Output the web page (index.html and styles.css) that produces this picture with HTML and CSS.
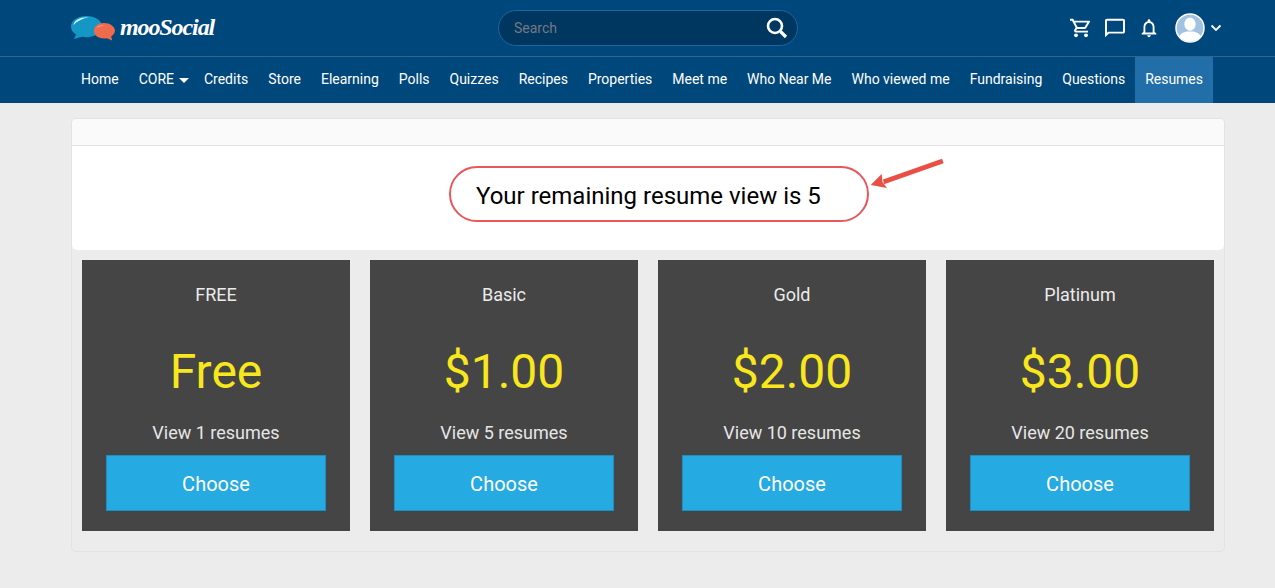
FILE: index.html
```html
<!DOCTYPE html>
<html lang="en">
<head>
<meta charset="utf-8">
<title>Resumes</title>
<link rel="stylesheet" href="styles.css">
</head>
<body>
<header class="site-header">
  <div class="top-row">
    <a class="logo" href="#">
      <svg class="logo-mark" width="44" height="26" viewBox="0 0 44 26">
        <path d="M15.500 1C7 1 0 5.500 0 11.500c0 3.500 2 6.200 5 8L3 24l8-2.200c1.400.3 3 .4 4.500.4 8.500 0 15.500-4.700 15.500-10.700S24 1 15.500 1z" fill="#1597c6"/>
        <path d="M2.500 10C3.500 5 9 1.800 18 2.300c-6.500 1-11 3.500-15.500 7.700z" fill="#d5f1f9"/>
        <path d="M33 8c-5.800 0-10.200 3.400-10.200 7.800s4.400 7.700 10.200 7.700c1 0 2-.1 2.900-.3l5.300 2.300-1-4.200c2.300-1.300 3.800-3.300 3.800-5.500C44 11.400 39 8 33 8z" fill="#ee6b4d"/>
        <path d="M25.500 13c1.800-2 4.500-3 8.500-2.800-3.600.4-6 1.200-8.500 2.800z" fill="#fbc6b6"/>
      </svg>
      <span class="logo-text">mooSocial</span>
    </a>
    <form class="search">
      <span class="search-text">Search</span>
      <svg class="search-icon" width="22" height="22" viewBox="0 0 22 22">
        <circle cx="9" cy="9" r="7" fill="none" stroke="#fff" stroke-width="2.600"/>
        <path d="M14.500 14.500l5.500 5.500" stroke="#fff" stroke-width="3.200" fill="none"/>
      </svg>
    </form>
    <div class="actions">
      <svg width="24" height="22" viewBox="0 0 24 24" preserveAspectRatio="none"><path d="M15.550 13c.750 0 1.410-.410 1.750-1.030l3.580-6.490A.996.996 0 0 0 20.010 4H5.210l-.94-2H1v2h2l3.600 7.590-1.350 2.440C4.520 15.370 5.480 17 7 17h12v-2H7l1.100-2h7.450zM6.160 6h12.150l-2.760 5H8.530L6.160 6zM7 18c-1.100 0-1.990.900-1.990 2S5.900 22 7 22s2-.900 2-2-.900-2-2-2zm10 0c-1.100 0-1.990.900-1.990 2s.890 2 1.990 2 2-.900 2-2-.900-2-2-2z" fill="#fff"/></svg>
      <svg width="24" height="22" viewBox="0 0 24 24" preserveAspectRatio="none"><path d="M20 2H4c-1.100 0-2 .900-2 2v18l4-4h14c1.100 0 2-.900 2-2V4c0-1.100-.900-2-2-2zm0 14H5.200L4 17.200V4h16v12z" fill="#fff"/></svg>
      <svg width="24" height="22" viewBox="0 0 24 24"><path d="M12 22c1.100 0 2-.900 2-2h-4c0 1.100.900 2 2 2zm6-6v-5c0-3.070-1.630-5.640-4.500-6.320V4c0-.830-.670-1.500-1.500-1.500s-1.500.670-1.500 1.500v.680C7.640 5.360 6 7.920 6 11v5l-2 2v1h16v-1l-2-2zm-2 1H8v-6c0-2.480 1.510-4.500 4-4.500s4 2.020 4 4.500v6z" fill="#fff"/></svg>
      <div class="account">
        <svg width="30" height="30" viewBox="0 0 31 31">
          <defs><clipPath id="avatar-clip"><circle cx="15.500" cy="15.500" r="14"/></clipPath></defs>
          <circle cx="15.500" cy="15.500" r="14.500" fill="#a3c2e2" stroke="#fff" stroke-width="1.500"/>
          <g clip-path="url(#avatar-clip)" fill="#fff">
            <ellipse cx="15.500" cy="11.500" rx="5.800" ry="6.800"/>
            <path d="M4 31v-5c0-4 4-6 8-7h7c4 1 8 3 8 7v5z"/>
          </g>
        </svg>
        <svg width="12" height="8" viewBox="0 0 12 8"><path d="M1.500 1.500L6 6l4.500-4.500" fill="none" stroke="#fff" stroke-width="1.800"/></svg>
      </div>
    </div>
  </div>
  <nav class="nav">
    <a class="nav-item" href="#">Home</a>
    <a class="nav-item nav-core" href="#">CORE <span class="caret"></span></a>
    <a class="nav-item" href="#">Credits</a>
    <a class="nav-item" href="#">Store</a>
    <a class="nav-item" href="#">Elearning</a>
    <a class="nav-item" href="#">Polls</a>
    <a class="nav-item" href="#">Quizzes</a>
    <a class="nav-item" href="#">Recipes</a>
    <a class="nav-item" href="#">Properties</a>
    <a class="nav-item" href="#">Meet me</a>
    <a class="nav-item" href="#">Who Near Me</a>
    <a class="nav-item" href="#">Who viewed me</a>
    <a class="nav-item" href="#">Fundraising</a>
    <a class="nav-item" href="#">Questions</a>
    <a class="nav-item active" href="#">Resumes</a>
  </nav>
</header>
<main class="panel">
  <div class="panel-head"></div>
  <section class="notice">
    <p class="pill">Your remaining resume view is 5</p>
    <svg class="arrow" width="80" height="34" viewBox="0 0 80 34">
      <path d="M72 .8L73.600 5.300L14 26.300L13 21.500z" fill="#ea4f45"/>
      <path d="M.7 27L11.700 16 12.500 24 17 30z" fill="#ea4f45"/>
    </svg>
  </section>
  <section class="plans">
    <article class="plan">
      <h2 class="plan-name">FREE</h2>
      <div class="plan-price">Free</div>
      <p class="plan-desc">View 1 resumes</p>
      <a class="choose" href="#">Choose</a>
    </article>
    <article class="plan">
      <h2 class="plan-name">Basic</h2>
      <div class="plan-price">$1.00</div>
      <p class="plan-desc">View 5 resumes</p>
      <a class="choose" href="#">Choose</a>
    </article>
    <article class="plan">
      <h2 class="plan-name">Gold</h2>
      <div class="plan-price">$2.00</div>
      <p class="plan-desc">View 10 resumes</p>
      <a class="choose" href="#">Choose</a>
    </article>
    <article class="plan">
      <h2 class="plan-name">Platinum</h2>
      <div class="plan-price">$3.00</div>
      <p class="plan-desc">View 20 resumes</p>
      <a class="choose" href="#">Choose</a>
    </article>
  </section>
</main>
</body>
</html>
```
FILE: styles.css
```css
* { box-sizing: border-box; }
html, body { height: 100%; }
body {
  margin: 0;
  background: #ececec;
  font-family: Roboto, "Liberation Sans", sans-serif;
  overflow: hidden;
}
a { text-decoration: none; color: inherit; }
.site-header { background: #00477c; height: 103px; }
.top-row {
  height: 57px;
  border-bottom: 1px solid #2f6690;
  display: flex;
  align-items: center;
  padding: 0 53px 0 71px;
}
.logo { display: flex; align-items: center; gap: 5px; width: 427px; padding-bottom: 1px; }
.logo-mark { display: block; }
.logo-text {
  font-family: "Liberation Serif", serif;
  font-style: italic;
  font-weight: 700;
  font-size: 24px;
  letter-spacing: -1.1px;
  color: #fff;
}
.search {
  width: 300px;
  height: 36px;
  border: 1px solid #1d659f;
  border-radius: 18px;
  background: #003761;
  display: flex;
  align-items: center;
  justify-content: space-between;
  padding: 0 9px 0 15px;
}
.search-text { color: #75797f; font-size: 14px; }
.search-icon { display: block; }
.actions { width: 424px; display: flex; align-items: center; justify-content: flex-end; gap: 10px; }
.account { display: flex; align-items: center; gap: 5px; margin-left: 4px; }
.nav { height: 46px; display: flex; padding-left: 71px; }
.nav-item {
  display: flex;
  align-items: center;
  gap: 5px;
  padding: 0 10px 2px;
  color: #fff;
  font-size: 14px;
  font-weight: 400;
  letter-spacing: -0.006px;
}
.nav-core { padding-right: 5px; }
.caret {
  width: 0; height: 0;
  margin-top: 3px;
  border-left: 5px solid transparent;
  border-right: 5px solid transparent;
  border-top: 5px solid #fff;
}
.nav-item.active { background: #216ea8; }
.panel {
  width: 1154px;
  height: 434px;
  margin: 15px 0 0 71px;
  border: 1px solid #e3e3e3;
  border-radius: 5px;
  overflow: hidden;
}
.panel-head { height: 27px; background: #fafafa; border-bottom: 1px solid #e3e3e3; }
.notice {
  position: relative;
  height: 104px;
  background: #fff;
  border-radius: 0 0 5px 5px;
  padding: 20px 0 0 377px;
}
.pill {
  margin: 0;
  width: 420px;
  height: 56px;
  border: 2px solid #e8585a;
  border-radius: 28px;
  display: flex;
  align-items: center;
  padding: 4px 0 0 25px;
  font-size: 24px;
  color: #000;
}
.arrow { position: absolute; left: 798px; top: 12px; }
.plans { display: flex; gap: 20px; padding: 10px; }
.plan {
  width: 268px;
  height: 271px;
  background: #454545;
  text-align: center;
  padding: 0 24px;
  display: flex;
  flex-direction: column;
}
.plan-name { margin: 24px 0 0; height: 21px; line-height: 21px; font-size: 18px; font-weight: 400; color: #ebebeb; }
.plan-price { margin-top: 40px; height: 54px; line-height: 54px; font-size: 48px; color: #f8e71c; }
.plan-desc { margin: 22px 0 0; height: 24px; line-height: 24px; font-size: 18px; color: #e6e6e6; }
.choose {
  margin-top: 10px;
  height: 56px;
  padding-top: 2px;
  background: #25aae1;
  border: 1px solid #1e8fc5;
  display: flex;
  align-items: center;
  justify-content: center;
  color: #fff;
  font-size: 20px;
}
```
